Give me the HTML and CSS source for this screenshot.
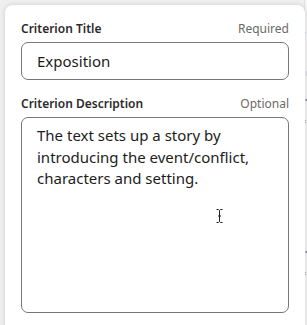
FILE: index.html
```html
<!DOCTYPE html>
<html lang="en">
<head>
<meta charset="utf-8">
<title>Criterion</title>
<link rel="stylesheet" href="styles.css">
</head>
<body>
<div class="page">
  <div class="backdrop">
    <span class="mark m1">=</span>
    <span class="mark m2">:</span>
    <span class="mark m3">|</span>
    <span class="mark m4">'</span>
    <span class="mark m5">=</span>
    <span class="mark m6">:</span>
  </div>
  <div class="card">
    <div class="field">
      <div class="label-row">
        <span class="label">Criterion Title</span>
        <span class="hint">Required</span>
      </div>
      <div class="input">Exposition</div>
    </div>
    <div class="field">
      <div class="label-row">
        <span class="label">Criterion Description</span>
        <span class="hint">Optional</span>
      </div>
      <div class="textarea">The text sets up a story by introducing the event/conflict, characters and setting.</div>
    </div>
  </div>
  <svg class="cursor" width="9" height="16" viewBox="0 0 9 16" aria-hidden="true">
    <path d="M1.5 1.5 L3.5 1.5 L4.5 2.5 L5.5 1.5 L7.5 1.5 M4.5 2.5 L4.5 13.5 M1.5 14.5 L3.5 14.5 L4.5 13.5 L5.5 14.5 L7.5 14.5 M3 8 L6 8" fill="none" stroke="#222" stroke-width="1"/>
  </svg>
</div>
</body>
</html>
```
FILE: styles.css
```css
html, body {
  margin: 0;
  padding: 0;
}
body {
  background: #efefef;
  font-family: "Noto Sans", "Open Sans", sans-serif;
  width: 307px;
  height: 325px;
  overflow: hidden;
}
.page {
  position: relative;
  width: 307px;
  height: 325px;
  overflow: hidden;
  padding: 5px 0 0 5px;
  box-sizing: border-box;
}
.backdrop {
  position: absolute;
  left: 304px;
  top: 0;
  width: 3px;
  height: 325px;
  background: #f3f3f3;
  border-left: 1px solid #e2e2e2;
}
.mark {
  position: absolute;
  left: 0;
  font-size: 5px;
  line-height: 6px;
  color: #444;
}
.m1 { top: 97px; }
.m2 { top: 118px; }
.m3 { top: 70px; color: #aaa; }
.m4 { top: 31px; color: #999; }
.m5 { top: 249px; }
.m6 { top: 270px; }
.card {
  position: relative;
  z-index: 1;
  width: 300px;
  height: 330px;
  box-sizing: border-box;
  background: #fff;
  border-radius: 8px;
  box-shadow: 0 0 5px rgba(0, 0, 0, 0.14);
  padding: 16px 16px 0 16px;
  display: flex;
  flex-direction: column;
  gap: 16px;
}
.field {
  display: flex;
  flex-direction: column;
  gap: 5px;
  flex: none;
}
.label-row {
  display: flex;
  justify-content: space-between;
  align-items: baseline;
  line-height: 16px;
}
.label {
  font-size: 12px;
  font-weight: 600;
  color: #2b2b2b;
}
.hint {
  font-size: 12px;
  color: #6a6a6a;
}
.input {
  height: 38px;
  box-sizing: border-box;
  border: 1px solid #777;
  border-radius: 7px;
  padding: 0 15px;
  display: flex;
  align-items: center;
  font-size: 15px;
  color: #1c1c1c;
}
.textarea {
  height: 196px;
  flex: none;
  box-sizing: border-box;
  border: 1px solid #777;
  border-radius: 7px;
  padding: 7px 15px;
  font-size: 15px;
  line-height: 21.5px;
  color: #1c1c1c;
}
.cursor {
  position: absolute;
  left: 215px;
  top: 208px;
  z-index: 2;
}
```
